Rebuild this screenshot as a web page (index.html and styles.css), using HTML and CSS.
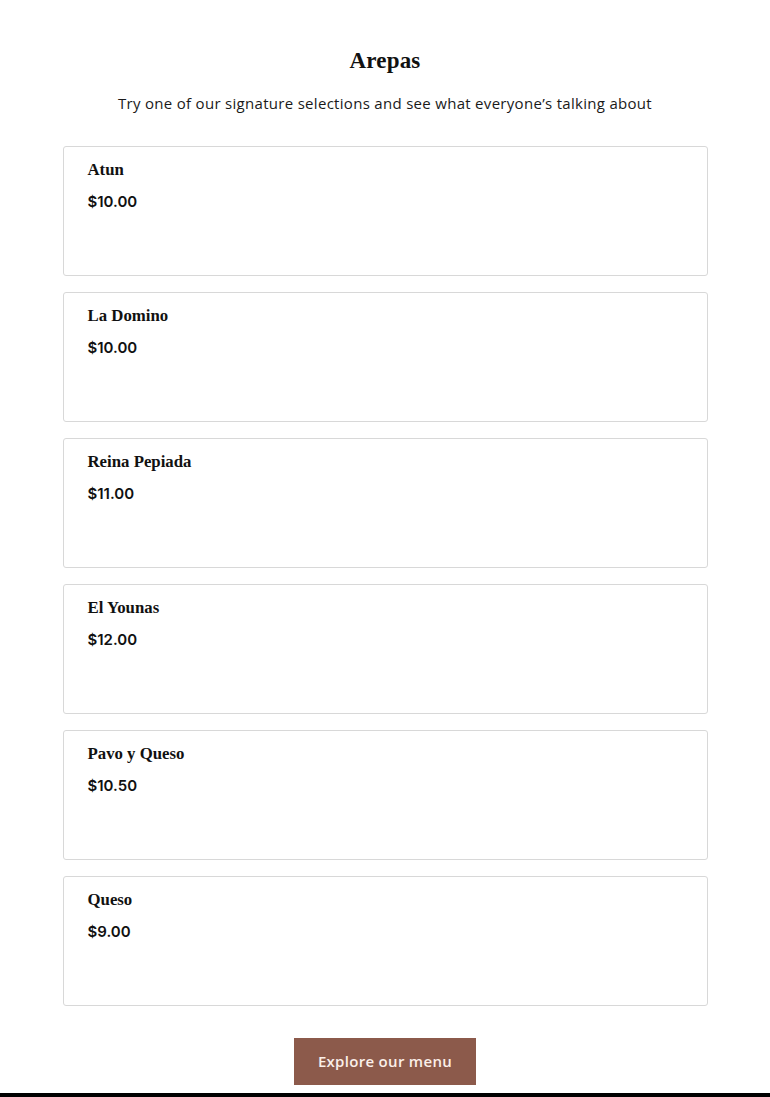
FILE: index.html
```html
<!DOCTYPE html>
<html>
<head>
<meta charset="utf-8">
<link rel="stylesheet" href="styles.css">
</head>
<body>
<section class="menu">
  <h1 class="title">Arepas</h1>
  <p class="subtitle">Try one of our signature selections and see what everyone’s talking about</p>
  <div class="list">
    <div class="card"><h2 class="name">Atun</h2><div class="price">$10.00</div></div>
    <div class="card"><h2 class="name">La Domino</h2><div class="price">$10.00</div></div>
    <div class="card"><h2 class="name">Reina Pepiada</h2><div class="price">$11.00</div></div>
    <div class="card"><h2 class="name">El Younas</h2><div class="price">$12.00</div></div>
    <div class="card"><h2 class="name">Pavo y Queso</h2><div class="price">$10.50</div></div>
    <div class="card"><h2 class="name">Queso</h2><div class="price">$9.00</div></div>
  </div>
  <div class="actions"><a class="button" href="#">Explore our menu</a></div>
</section>
<footer class="footer"></footer>
</body>
</html>
```
FILE: styles.css
```css
html, body { margin: 0; padding: 0; background: #fff; color: #111; }
.menu { width: 645px; margin: 0 auto; padding-top: 46px; }
.title {
  margin: 0; text-align: center;
  font-family: "Liberation Serif", serif; font-weight: 700;
  font-size: 23px; line-height: 30px; letter-spacing: 0.2px;
}
.subtitle {
  margin: 17px 0 0; text-align: center;
  font-family: "Open Sans", sans-serif; font-size: 15px; line-height: 20px;
  letter-spacing: 0.3px; color: #1a1a1a;
}
.list { margin-top: 33px; display: flex; flex-direction: column; gap: 16px; }
.card {
  height: 130px; box-sizing: border-box;
  border: 1px solid #d8d8d8; border-radius: 3px;
  padding: 12px 24px;
}
.name {
  margin: 0; font-family: "Liberation Serif", serif; font-weight: 700;
  font-size: 16.8px; line-height: 22px; color: #111;
}
.price {
  margin-top: 11px; font-family: "Inter", sans-serif; font-weight: 600;
  font-size: 15px; line-height: 20px; color: #111;
}
.actions { display: flex; justify-content: center; margin-top: 32px; }
.button {
  display: block; width: 182px; height: 47px; box-sizing: border-box;
  background: #8c5a4b; color: #fbefe9; text-decoration: none;
  font-family: "Open Sans", sans-serif; font-weight: 600; font-size: 15px;
  line-height: 47px; text-align: center; letter-spacing: 0.3px;
}
.footer { margin-top: 8px; height: 40px; background: #000; }
```
